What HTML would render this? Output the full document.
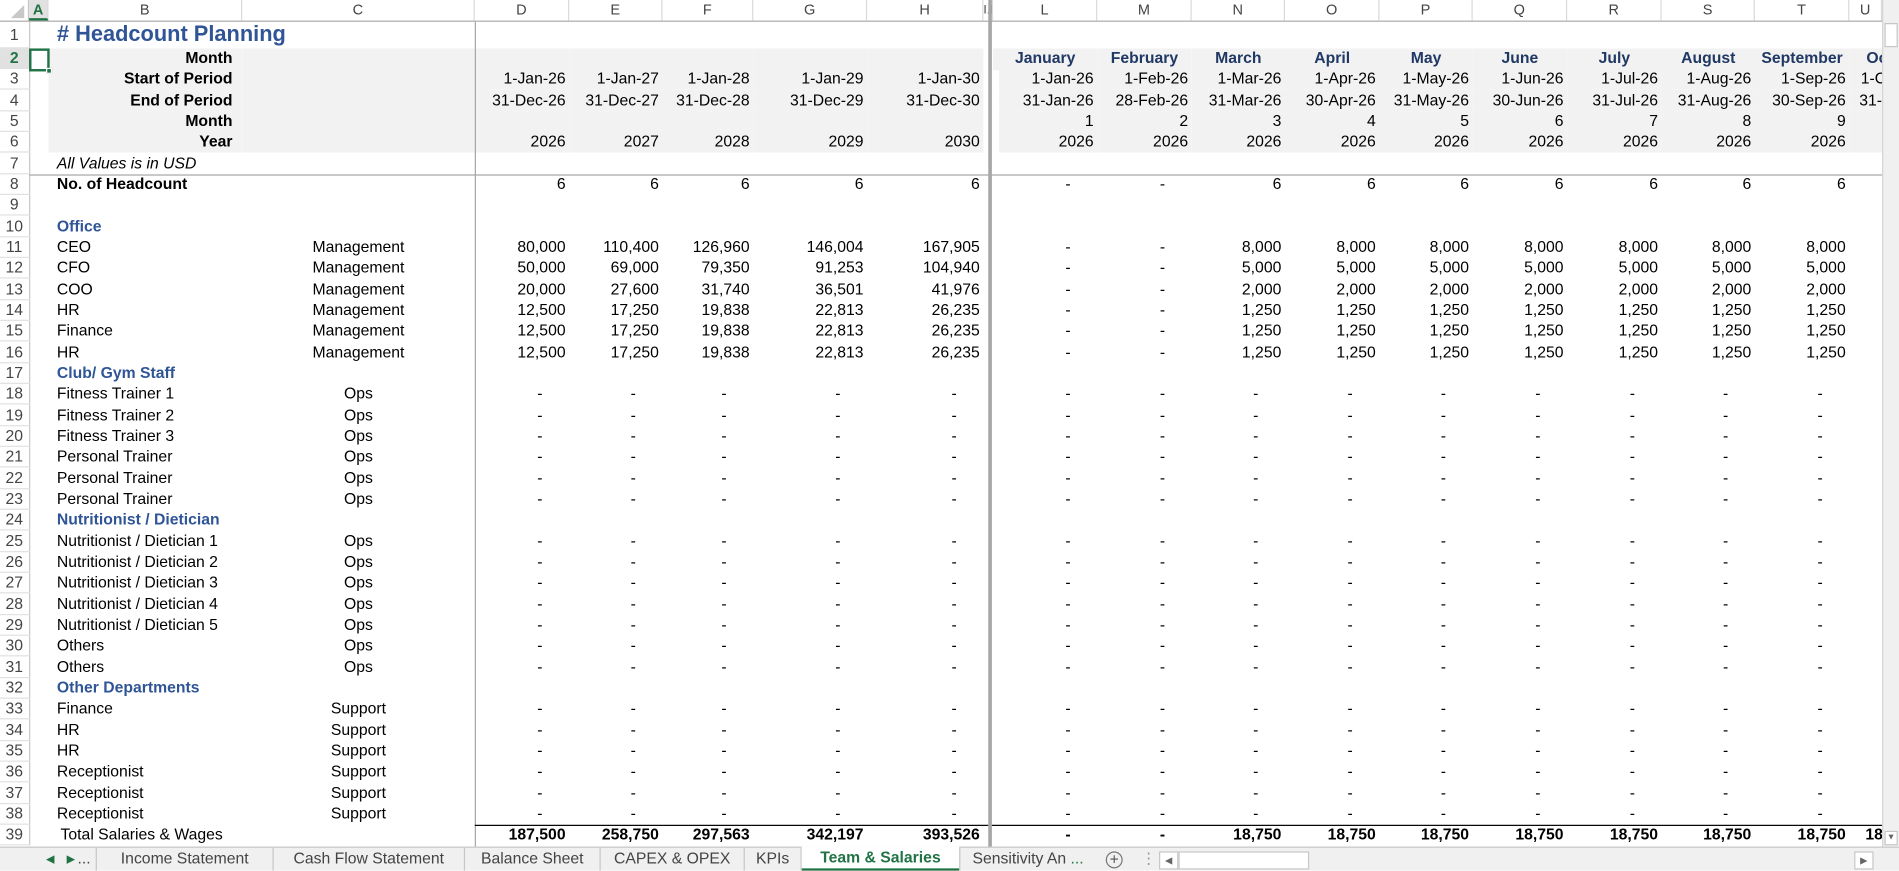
<!DOCTYPE html>
<html><head><meta charset="utf-8">
<style>
*{box-sizing:border-box;margin:0;padding:0}
html,body{width:1899px;height:871px;overflow:hidden;background:#fff;font-family:"Liberation Sans",Arial,sans-serif}
#s{position:absolute;left:0;top:0;width:1568px;height:719px;transform:scale(1.2111);transform-origin:0 0;overflow:hidden;background:#fff}
#hdr{position:absolute;left:0;top:0;width:1568px;height:18px;border-bottom:1px solid #ababab;background:#fff;font-size:12px;color:#444}
#hdr div{position:absolute;top:0;height:17px;line-height:17px;text-align:center;border-right:1px solid #dadada}
#grid{position:absolute;left:0;top:18px;width:1554px;height:681px;overflow:hidden}
table{border-collapse:collapse;table-layout:fixed;width:1605px;font-size:13px;color:#000}
td{padding:0 3px;white-space:nowrap;overflow:hidden;height:16px;line-height:16px;text-align:right}
tr:nth-child(3n+1) td{height:17px;line-height:17px}
tr.t1 td{height:21px;line-height:21px}
td.rn{text-align:center;color:#444;font-size:13px;padding:0;border-bottom:1px solid #e1e1e1;border-right:1px solid #c6c6c6;background:#fff}
td.l{text-align:left;padding-left:7px}
td.hl{text-align:right;font-weight:bold;padding-right:8px}
td.c{text-align:center}
td.d{padding-right:22px}
td.g{background:#f2f2f2}
td.mn{text-align:center;font-weight:bold;color:#1f3864}
.b{font-weight:bold}
.sec{font-weight:bold;color:#2f5597}
#tabs{position:absolute;left:0;top:699px;width:1568px;height:20px;background:#f0f0f0;border-top:1px solid #c6c6c6;font-size:13px;color:#444}
#tabs div{position:absolute;top:0;height:19px;line-height:18px}
.ov{position:absolute}
</style></head><body><div id="s">
<div id="hdr">
<div style="left:0;width:24px;border-right:1px solid #c6c6c6"><svg width="24" height="17"><polygon points="20,4 20,15 9,15" fill="#c8c8c8"/></svg></div>
<div style="left:24px;width:16px;color:#217346;font-weight:bold;background:#e1e1e1;border-bottom:2px solid #217346">A</div>
<div style="left:40px;width:160px">B</div>
<div style="left:200px;width:192px">C</div>
<div style="left:392px;width:78px">D</div>
<div style="left:470px;width:77px">E</div>
<div style="left:547px;width:75px">F</div>
<div style="left:622px;width:94px">G</div>
<div style="left:716px;width:96px">H</div>
<div style="left:812px;width:8px;font-size:10px;overflow:hidden">I.K</div>
<div style="left:820px;width:86px">L</div>
<div style="left:906px;width:78px">M</div>
<div style="left:984px;width:77px">N</div>
<div style="left:1061px;width:78px">O</div>
<div style="left:1139px;width:77px">P</div>
<div style="left:1216px;width:78px">Q</div>
<div style="left:1294px;width:78px">R</div>
<div style="left:1372px;width:77px">S</div>
<div style="left:1449px;width:78px">T</div>
<div style="left:1527px;width:27px">U</div>
</div>
<div id="grid"><table>
<colgroup><col style="width:24px"><col style="width:16px"><col style="width:160px"><col style="width:192px"><col style="width:78px"><col style="width:77px"><col style="width:75px"><col style="width:94px"><col style="width:96px"><col style="width:5px"><col style="width:3px"><col style="width:86px"><col style="width:78px"><col style="width:77px"><col style="width:78px"><col style="width:77px"><col style="width:78px"><col style="width:78px"><col style="width:77px"><col style="width:78px"><col style="width:78px"></colgroup>
<tr class="t1"><td class="rn">1</td><td></td><td class="l" colspan="2" style="font-size:18px;font-weight:bold;color:#2f5597;overflow:visible">#&nbsp;Headcount Planning</td><td></td><td></td><td></td><td></td><td></td><td></td><td></td><td></td><td></td><td></td><td></td><td></td><td></td><td></td><td></td><td></td><td></td></tr>
<tr><td class="rn" style="background:#e1e1e1;color:#217346;font-weight:bold">2</td><td></td><td class="hl g">Month</td><td class="g"></td><td class="g"></td><td class="g"></td><td class="g"></td><td class="g"></td><td class="g"></td><td></td><td></td><td class="g mn">January</td><td class="g mn">February</td><td class="g mn">March</td><td class="g mn">April</td><td class="g mn">May</td><td class="g mn">June</td><td class="g mn">July</td><td class="g mn">August</td><td class="g mn">September</td><td class="g mn">October</td></tr>
<tr><td class="rn">3</td><td></td><td class="hl g">Start of Period</td><td class="g"></td><td class="g">1-Jan-26</td><td class="g">1-Jan-27</td><td class="g">1-Jan-28</td><td class="g">1-Jan-29</td><td class="g">1-Jan-30</td><td></td><td></td><td class="g">1-Jan-26</td><td class="g">1-Feb-26</td><td class="g">1-Mar-26</td><td class="g">1-Apr-26</td><td class="g">1-May-26</td><td class="g">1-Jun-26</td><td class="g">1-Jul-26</td><td class="g">1-Aug-26</td><td class="g">1-Sep-26</td><td class="g" style="padding-right:18px">1-Oct-26</td></tr>
<tr><td class="rn">4</td><td></td><td class="hl g">End of Period</td><td class="g"></td><td class="g">31-Dec-26</td><td class="g">31-Dec-27</td><td class="g">31-Dec-28</td><td class="g">31-Dec-29</td><td class="g">31-Dec-30</td><td></td><td></td><td class="g">31-Jan-26</td><td class="g">28-Feb-26</td><td class="g">31-Mar-26</td><td class="g">30-Apr-26</td><td class="g">31-May-26</td><td class="g">30-Jun-26</td><td class="g">31-Jul-26</td><td class="g">31-Aug-26</td><td class="g">30-Sep-26</td><td class="g" style="padding-right:12px">31-Oct-26</td></tr>
<tr><td class="rn">5</td><td></td><td class="hl g">Month</td><td class="g"></td><td class="g"></td><td class="g"></td><td class="g"></td><td class="g"></td><td class="g"></td><td></td><td></td><td class="g">1</td><td class="g">2</td><td class="g">3</td><td class="g">4</td><td class="g">5</td><td class="g">6</td><td class="g">7</td><td class="g">8</td><td class="g">9</td><td class="g">10</td></tr>
<tr><td class="rn">6</td><td></td><td class="hl g">Year</td><td class="g"></td><td class="g">2026</td><td class="g">2027</td><td class="g">2028</td><td class="g">2029</td><td class="g">2030</td><td></td><td></td><td class="g">2026</td><td class="g">2026</td><td class="g">2026</td><td class="g">2026</td><td class="g">2026</td><td class="g">2026</td><td class="g">2026</td><td class="g">2026</td><td class="g">2026</td><td class="g">2026</td></tr>
<tr><td class="rn">7</td><td></td><td class="l" style="font-style:italic">All Values is in USD</td><td></td><td></td><td></td><td></td><td></td><td></td><td></td><td></td><td></td><td></td><td></td><td></td><td></td><td></td><td></td><td></td><td></td><td></td></tr>
<tr><td class="rn">8</td><td></td><td class="l b">No. of Headcount</td><td></td><td>6</td><td>6</td><td>6</td><td>6</td><td>6</td><td></td><td></td><td class="d">-</td><td class="d">-</td><td>6</td><td>6</td><td>6</td><td>6</td><td>6</td><td>6</td><td>6</td><td></td></tr>
<tr><td class="rn">9</td><td></td><td></td><td></td><td></td><td></td><td></td><td></td><td></td><td></td><td></td><td></td><td></td><td></td><td></td><td></td><td></td><td></td><td></td><td></td><td></td></tr>
<tr><td class="rn">10</td><td></td><td class="l sec">Office</td><td></td><td></td><td></td><td></td><td></td><td></td><td></td><td></td><td></td><td></td><td></td><td></td><td></td><td></td><td></td><td></td><td></td><td></td></tr>
<tr><td class="rn">11</td><td></td><td class="l">CEO</td><td class="c">Management</td><td>80,000</td><td>110,400</td><td>126,960</td><td>146,004</td><td>167,905</td><td></td><td></td><td class="d">-</td><td class="d">-</td><td>8,000</td><td>8,000</td><td>8,000</td><td>8,000</td><td>8,000</td><td>8,000</td><td>8,000</td><td></td></tr>
<tr><td class="rn">12</td><td></td><td class="l">CFO</td><td class="c">Management</td><td>50,000</td><td>69,000</td><td>79,350</td><td>91,253</td><td>104,940</td><td></td><td></td><td class="d">-</td><td class="d">-</td><td>5,000</td><td>5,000</td><td>5,000</td><td>5,000</td><td>5,000</td><td>5,000</td><td>5,000</td><td></td></tr>
<tr><td class="rn">13</td><td></td><td class="l">COO</td><td class="c">Management</td><td>20,000</td><td>27,600</td><td>31,740</td><td>36,501</td><td>41,976</td><td></td><td></td><td class="d">-</td><td class="d">-</td><td>2,000</td><td>2,000</td><td>2,000</td><td>2,000</td><td>2,000</td><td>2,000</td><td>2,000</td><td></td></tr>
<tr><td class="rn">14</td><td></td><td class="l">HR</td><td class="c">Management</td><td>12,500</td><td>17,250</td><td>19,838</td><td>22,813</td><td>26,235</td><td></td><td></td><td class="d">-</td><td class="d">-</td><td>1,250</td><td>1,250</td><td>1,250</td><td>1,250</td><td>1,250</td><td>1,250</td><td>1,250</td><td></td></tr>
<tr><td class="rn">15</td><td></td><td class="l">Finance</td><td class="c">Management</td><td>12,500</td><td>17,250</td><td>19,838</td><td>22,813</td><td>26,235</td><td></td><td></td><td class="d">-</td><td class="d">-</td><td>1,250</td><td>1,250</td><td>1,250</td><td>1,250</td><td>1,250</td><td>1,250</td><td>1,250</td><td></td></tr>
<tr><td class="rn">16</td><td></td><td class="l">HR</td><td class="c">Management</td><td>12,500</td><td>17,250</td><td>19,838</td><td>22,813</td><td>26,235</td><td></td><td></td><td class="d">-</td><td class="d">-</td><td>1,250</td><td>1,250</td><td>1,250</td><td>1,250</td><td>1,250</td><td>1,250</td><td>1,250</td><td></td></tr>
<tr><td class="rn">17</td><td></td><td class="l sec">Club/ Gym Staff</td><td></td><td></td><td></td><td></td><td></td><td></td><td></td><td></td><td></td><td></td><td></td><td></td><td></td><td></td><td></td><td></td><td></td><td></td></tr>
<tr><td class="rn">18</td><td></td><td class="l">Fitness Trainer 1</td><td class="c">Ops</td><td class="d">-</td><td class="d">-</td><td class="d">-</td><td class="d">-</td><td class="d">-</td><td></td><td></td><td class="d">-</td><td class="d">-</td><td class="d">-</td><td class="d">-</td><td class="d">-</td><td class="d">-</td><td class="d">-</td><td class="d">-</td><td class="d">-</td><td></td></tr>
<tr><td class="rn">19</td><td></td><td class="l">Fitness Trainer 2</td><td class="c">Ops</td><td class="d">-</td><td class="d">-</td><td class="d">-</td><td class="d">-</td><td class="d">-</td><td></td><td></td><td class="d">-</td><td class="d">-</td><td class="d">-</td><td class="d">-</td><td class="d">-</td><td class="d">-</td><td class="d">-</td><td class="d">-</td><td class="d">-</td><td></td></tr>
<tr><td class="rn">20</td><td></td><td class="l">Fitness Trainer 3</td><td class="c">Ops</td><td class="d">-</td><td class="d">-</td><td class="d">-</td><td class="d">-</td><td class="d">-</td><td></td><td></td><td class="d">-</td><td class="d">-</td><td class="d">-</td><td class="d">-</td><td class="d">-</td><td class="d">-</td><td class="d">-</td><td class="d">-</td><td class="d">-</td><td></td></tr>
<tr><td class="rn">21</td><td></td><td class="l">Personal Trainer</td><td class="c">Ops</td><td class="d">-</td><td class="d">-</td><td class="d">-</td><td class="d">-</td><td class="d">-</td><td></td><td></td><td class="d">-</td><td class="d">-</td><td class="d">-</td><td class="d">-</td><td class="d">-</td><td class="d">-</td><td class="d">-</td><td class="d">-</td><td class="d">-</td><td></td></tr>
<tr><td class="rn">22</td><td></td><td class="l">Personal Trainer</td><td class="c">Ops</td><td class="d">-</td><td class="d">-</td><td class="d">-</td><td class="d">-</td><td class="d">-</td><td></td><td></td><td class="d">-</td><td class="d">-</td><td class="d">-</td><td class="d">-</td><td class="d">-</td><td class="d">-</td><td class="d">-</td><td class="d">-</td><td class="d">-</td><td></td></tr>
<tr><td class="rn">23</td><td></td><td class="l">Personal Trainer</td><td class="c">Ops</td><td class="d">-</td><td class="d">-</td><td class="d">-</td><td class="d">-</td><td class="d">-</td><td></td><td></td><td class="d">-</td><td class="d">-</td><td class="d">-</td><td class="d">-</td><td class="d">-</td><td class="d">-</td><td class="d">-</td><td class="d">-</td><td class="d">-</td><td></td></tr>
<tr><td class="rn">24</td><td></td><td class="l sec">Nutritionist / Dietician</td><td></td><td></td><td></td><td></td><td></td><td></td><td></td><td></td><td></td><td></td><td></td><td></td><td></td><td></td><td></td><td></td><td></td><td></td></tr>
<tr><td class="rn">25</td><td></td><td class="l">Nutritionist / Dietician 1</td><td class="c">Ops</td><td class="d">-</td><td class="d">-</td><td class="d">-</td><td class="d">-</td><td class="d">-</td><td></td><td></td><td class="d">-</td><td class="d">-</td><td class="d">-</td><td class="d">-</td><td class="d">-</td><td class="d">-</td><td class="d">-</td><td class="d">-</td><td class="d">-</td><td></td></tr>
<tr><td class="rn">26</td><td></td><td class="l">Nutritionist / Dietician 2</td><td class="c">Ops</td><td class="d">-</td><td class="d">-</td><td class="d">-</td><td class="d">-</td><td class="d">-</td><td></td><td></td><td class="d">-</td><td class="d">-</td><td class="d">-</td><td class="d">-</td><td class="d">-</td><td class="d">-</td><td class="d">-</td><td class="d">-</td><td class="d">-</td><td></td></tr>
<tr><td class="rn">27</td><td></td><td class="l">Nutritionist / Dietician 3</td><td class="c">Ops</td><td class="d">-</td><td class="d">-</td><td class="d">-</td><td class="d">-</td><td class="d">-</td><td></td><td></td><td class="d">-</td><td class="d">-</td><td class="d">-</td><td class="d">-</td><td class="d">-</td><td class="d">-</td><td class="d">-</td><td class="d">-</td><td class="d">-</td><td></td></tr>
<tr><td class="rn">28</td><td></td><td class="l">Nutritionist / Dietician 4</td><td class="c">Ops</td><td class="d">-</td><td class="d">-</td><td class="d">-</td><td class="d">-</td><td class="d">-</td><td></td><td></td><td class="d">-</td><td class="d">-</td><td class="d">-</td><td class="d">-</td><td class="d">-</td><td class="d">-</td><td class="d">-</td><td class="d">-</td><td class="d">-</td><td></td></tr>
<tr><td class="rn">29</td><td></td><td class="l">Nutritionist / Dietician 5</td><td class="c">Ops</td><td class="d">-</td><td class="d">-</td><td class="d">-</td><td class="d">-</td><td class="d">-</td><td></td><td></td><td class="d">-</td><td class="d">-</td><td class="d">-</td><td class="d">-</td><td class="d">-</td><td class="d">-</td><td class="d">-</td><td class="d">-</td><td class="d">-</td><td></td></tr>
<tr><td class="rn">30</td><td></td><td class="l">Others</td><td class="c">Ops</td><td class="d">-</td><td class="d">-</td><td class="d">-</td><td class="d">-</td><td class="d">-</td><td></td><td></td><td class="d">-</td><td class="d">-</td><td class="d">-</td><td class="d">-</td><td class="d">-</td><td class="d">-</td><td class="d">-</td><td class="d">-</td><td class="d">-</td><td></td></tr>
<tr><td class="rn">31</td><td></td><td class="l">Others</td><td class="c">Ops</td><td class="d">-</td><td class="d">-</td><td class="d">-</td><td class="d">-</td><td class="d">-</td><td></td><td></td><td class="d">-</td><td class="d">-</td><td class="d">-</td><td class="d">-</td><td class="d">-</td><td class="d">-</td><td class="d">-</td><td class="d">-</td><td class="d">-</td><td></td></tr>
<tr><td class="rn">32</td><td></td><td class="l sec">Other Departments</td><td></td><td></td><td></td><td></td><td></td><td></td><td></td><td></td><td></td><td></td><td></td><td></td><td></td><td></td><td></td><td></td><td></td><td></td></tr>
<tr><td class="rn">33</td><td></td><td class="l">Finance</td><td class="c">Support</td><td class="d">-</td><td class="d">-</td><td class="d">-</td><td class="d">-</td><td class="d">-</td><td></td><td></td><td class="d">-</td><td class="d">-</td><td class="d">-</td><td class="d">-</td><td class="d">-</td><td class="d">-</td><td class="d">-</td><td class="d">-</td><td class="d">-</td><td></td></tr>
<tr><td class="rn">34</td><td></td><td class="l">HR</td><td class="c">Support</td><td class="d">-</td><td class="d">-</td><td class="d">-</td><td class="d">-</td><td class="d">-</td><td></td><td></td><td class="d">-</td><td class="d">-</td><td class="d">-</td><td class="d">-</td><td class="d">-</td><td class="d">-</td><td class="d">-</td><td class="d">-</td><td class="d">-</td><td></td></tr>
<tr><td class="rn">35</td><td></td><td class="l">HR</td><td class="c">Support</td><td class="d">-</td><td class="d">-</td><td class="d">-</td><td class="d">-</td><td class="d">-</td><td></td><td></td><td class="d">-</td><td class="d">-</td><td class="d">-</td><td class="d">-</td><td class="d">-</td><td class="d">-</td><td class="d">-</td><td class="d">-</td><td class="d">-</td><td></td></tr>
<tr><td class="rn">36</td><td></td><td class="l">Receptionist</td><td class="c">Support</td><td class="d">-</td><td class="d">-</td><td class="d">-</td><td class="d">-</td><td class="d">-</td><td></td><td></td><td class="d">-</td><td class="d">-</td><td class="d">-</td><td class="d">-</td><td class="d">-</td><td class="d">-</td><td class="d">-</td><td class="d">-</td><td class="d">-</td><td></td></tr>
<tr><td class="rn">37</td><td></td><td class="l">Receptionist</td><td class="c">Support</td><td class="d">-</td><td class="d">-</td><td class="d">-</td><td class="d">-</td><td class="d">-</td><td></td><td></td><td class="d">-</td><td class="d">-</td><td class="d">-</td><td class="d">-</td><td class="d">-</td><td class="d">-</td><td class="d">-</td><td class="d">-</td><td class="d">-</td><td></td></tr>
<tr><td class="rn">38</td><td></td><td class="l">Receptionist</td><td class="c">Support</td><td class="d">-</td><td class="d">-</td><td class="d">-</td><td class="d">-</td><td class="d">-</td><td></td><td></td><td class="d">-</td><td class="d">-</td><td class="d">-</td><td class="d">-</td><td class="d">-</td><td class="d">-</td><td class="d">-</td><td class="d">-</td><td class="d">-</td><td></td></tr>
<tr class="b"><td class="rn" style="font-weight:normal">39</td><td></td><td class="l" style="font-weight:normal;padding-left:10px">Total Salaries &amp; Wages</td><td></td><td>187,500</td><td>258,750</td><td>297,563</td><td>342,197</td><td>393,526</td><td></td><td></td><td class="d">-</td><td class="d">-</td><td>18,750</td><td>18,750</td><td>18,750</td><td>18,750</td><td>18,750</td><td>18,750</td><td>18,750</td><td style="padding-right:25px">18,750</td></tr>
</table></div>
<!-- overlays -->
<div class="ov" style="left:820px;top:58px;width:5px;height:87px;background:#fff"></div>
<div class="ov" style="left:392px;top:18px;width:1px;height:681px;background:#a6a6a6"></div>
<div class="ov" style="left:816px;top:0;width:3px;height:699px;background:#a6a6a6"></div>
<div class="ov" style="left:24px;top:144px;width:1530px;height:1px;background:#a6a6a6"></div>
<div class="ov" style="left:392px;top:681px;width:424px;height:1px;background:#000"></div>
<div class="ov" style="left:819px;top:681px;width:735px;height:1px;background:#000"></div>
<div class="ov" style="left:24px;top:40px;width:17px;height:19px;border:2px solid #217346"></div>
<div class="ov" style="left:38px;top:56px;width:5px;height:5px;background:#217346;border:1px solid #fff"></div>
<!-- vertical scrollbar -->
<div class="ov" style="left:1554px;top:0;width:14px;height:699px;background:#f0f0f0;border-left:1px solid #d4d4d4"></div>
<div class="ov" style="left:1556px;top:19px;width:11px;height:20px;background:#fff;border:1px solid #c6c6c6"></div>
<div class="ov" style="left:1556px;top:686px;width:11px;height:12px;background:#fff;border:1px solid #c6c6c6;font-size:7px;color:#666;text-align:center;line-height:10px">▼</div>
<div id="tabs">
<div style="left:38px;font-size:9px;color:#217346">◀</div>
<div style="left:55px;font-size:9px;color:#217346">▶</div>
<div style="left:64px;">...</div>
<div style="left:79px;width:146px;border-left:1px solid #c6c6c6;text-align:center">Income Statement</div>
<div style="left:225px;width:158px;border-left:1px solid #c6c6c6;text-align:center">Cash Flow Statement</div>
<div style="left:383px;width:112px;border-left:1px solid #c6c6c6;text-align:center">Balance Sheet</div>
<div style="left:495px;width:119px;border-left:1px solid #c6c6c6;text-align:center">CAPEX &amp; OPEX</div>
<div style="left:614px;width:48px;border-left:1px solid #c6c6c6;border-right:1px solid #c6c6c6;text-align:center">KPIs</div>
<div style="left:662px;width:130px;top:-1px;height:20px;background:#fff;color:#217346;font-weight:bold;text-align:center;border-bottom:2px solid #217346">Team &amp; Salaries</div>
<div style="left:792px;width:118px;border-left:1px solid #c6c6c6;padding-left:10px;overflow:hidden">Sensitivity An <span style="color:#217346">...</span></div>
<div style="left:913px;top:3px;width:14px;height:14px;border:1px solid #777;border-radius:50%;line-height:12px;text-align:center;font-size:13px;color:#555">+</div>
<div style="left:942px;color:#999">⋮</div>
<div style="left:957px;top:3px;width:16px;height:15px;background:#fff;border:1px solid #c6c6c6;font-size:8px;line-height:13px;text-align:center;color:#666">◀</div>
<div style="left:973px;top:3px;width:108px;height:15px;background:#fff;border:1px solid #c6c6c6"></div>
<div style="left:1531px;top:3px;width:16px;height:15px;background:#fff;border:1px solid #c6c6c6;font-size:8px;line-height:13px;text-align:center;color:#666">▶</div>
</div>
</div></body></html>
